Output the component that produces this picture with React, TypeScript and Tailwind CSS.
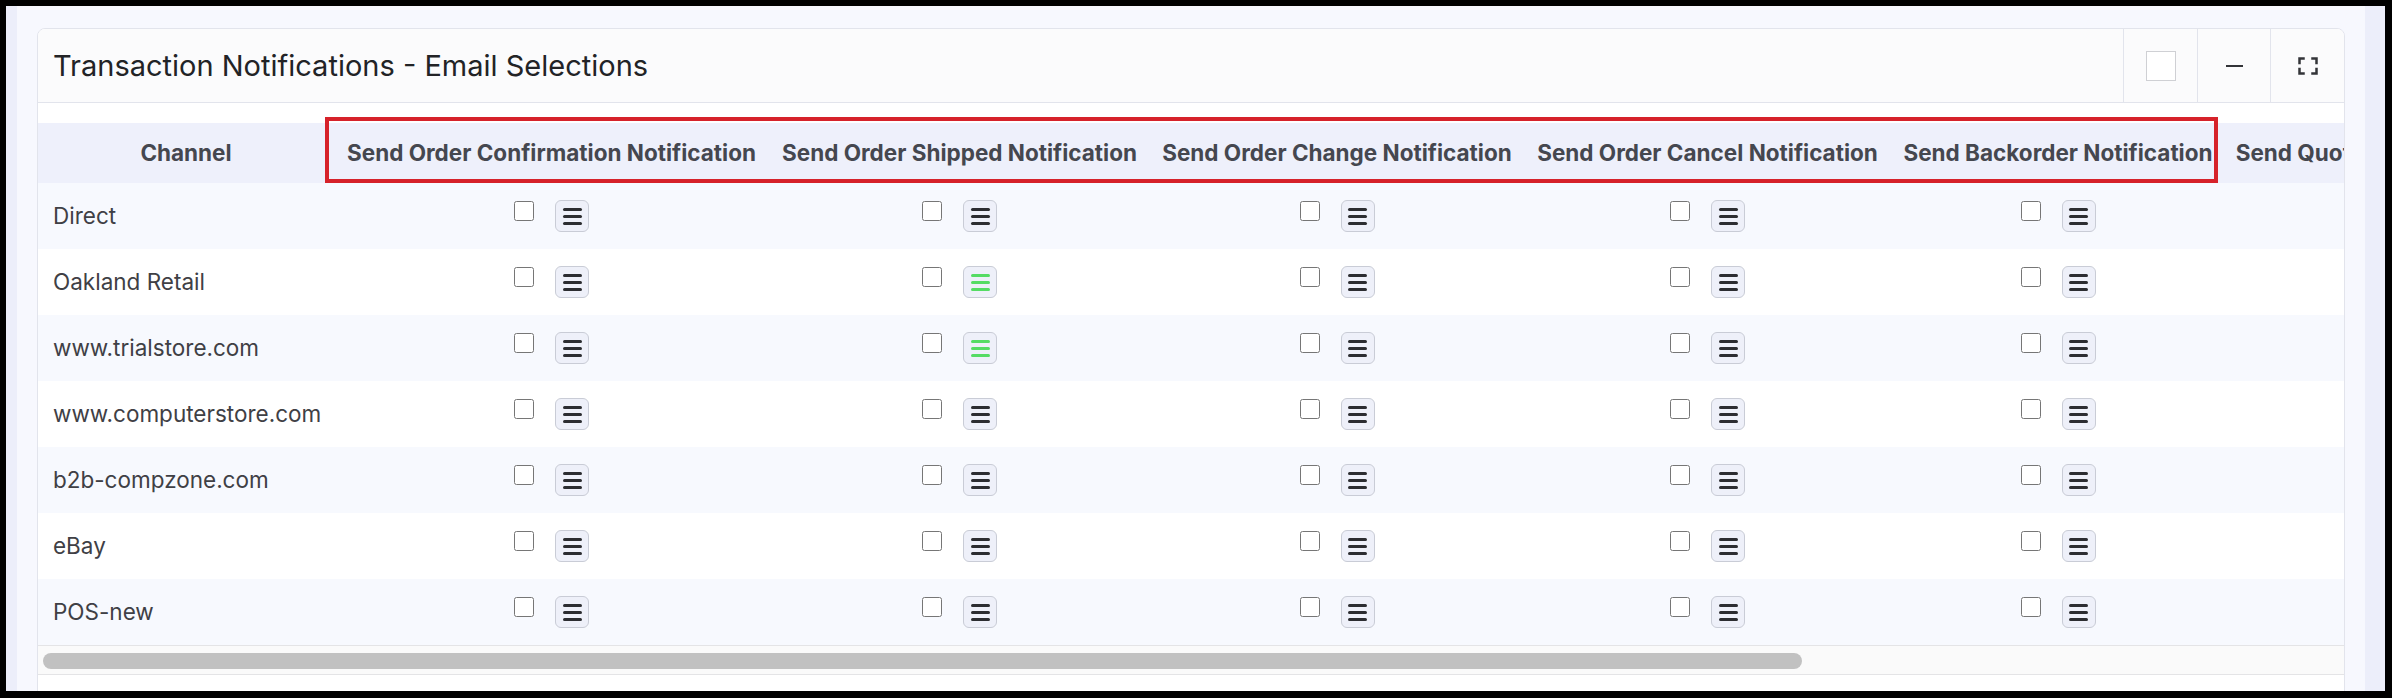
import React from 'react'

const columns = [
  { label: 'Send Order Confirmation Notification', width: 'w-[435px]' },
  { label: 'Send Order Shipped Notification', width: 'w-[381px]' },
  { label: 'Send Order Change Notification', width: 'w-[374px]' },
  { label: 'Send Order Cancel Notification', width: 'w-[367px]' },
  { label: 'Send Backorder Notification', width: 'w-[334px]' },
  { label: 'Send Quote Request Notification', width: 'w-[380px]' },
  { label: 'Send Invoice Notification', width: 'w-[415px]' },
]

const channels = [
  'Direct',
  'Oakland Retail',
  'www.trialstore.com',
  'www.computerstore.com',
  'b2b-compzone.com',
  'eBay',
  'POS-new',
]

// cells whose template menu is highlighted (has a template set)
const active: Record<string, number[]> = {
  'Oakland Retail': [1],
  'www.trialstore.com': [1],
}

function MenuButton({ on }: { on: boolean }) {
  const bar = on ? 'bg-[#55dc64]' : 'bg-[#2c2d31]'
  return (
    <button
      type="button"
      className="w-[34px] h-[32px] rounded-[6px] border border-[#c9ccd6] bg-[#eef0f9] flex flex-col items-center justify-center gap-[4px]"
    >
      <span className={`block w-[19px] h-[3px] rounded-full ${bar}`} />
      <span className={`block w-[19px] h-[3px] rounded-full ${bar}`} />
      <span className={`block w-[19px] h-[3px] rounded-full ${bar}`} />
    </button>
  )
}

function Cell({ on }: { on: boolean }) {
  return (
    <div className="flex items-start justify-center gap-[21px]">
      <input type="checkbox" className="w-[20px] h-[20px] m-0 mt-[1px]" />
      <MenuButton on={on} />
    </div>
  )
}

export default function App() {
  return (
    <div
      className="w-[2392px] h-[698px] overflow-hidden bg-black pt-[6px] pl-[6px] pr-[7px] pb-[7px]"
      style={{ fontFamily: 'Inter, "Noto Sans", sans-serif' }}
    >
      <div className="flex h-full">
        <div className="w-[11px] bg-[#eceefa]" />
        <div className="flex-1 min-w-0 bg-[#f7f8fe] px-[20px] pt-[22px] overflow-hidden">
          <div className="rounded-t-[8px] border border-[#e2e4ec] bg-white overflow-hidden">
            {/* title bar */}
            <div className="flex items-stretch h-[74px] border-b border-[#e2e4ec] bg-[#fbfbfc]">
              <div className="flex-1 flex items-center pl-[15px] text-[29px] text-[#222326]">
                Transaction Notifications - Email Selections
              </div>
              <div className="w-[74px] border-l border-[#e2e4ec] flex items-center justify-center">
                <span className="block w-[30px] h-[30px] border border-[#cfd0d4] bg-white" />
              </div>
              <div className="w-[73px] border-l border-[#e2e4ec] flex items-center justify-center">
                <span className="block w-[17px] h-[2px] bg-[#333438]" />
              </div>
              <div className="w-[74px] border-l border-[#e2e4ec] flex items-center justify-center">
                <svg width="20" height="18" viewBox="0 0 20 18" fill="none" stroke="#333438" strokeWidth="2.5" strokeLinecap="square">
                  <path d="M1.5 6V1.5H5.5" />
                  <path d="M14.5 1.5H18.5V6" />
                  <path d="M18.5 12V16.5H14.5" />
                  <path d="M5.5 16.5H1.5V12" />
                </svg>
              </div>
            </div>

            {/* table */}
            <div className="relative overflow-hidden pt-[20px]">
              <table className="table-fixed border-collapse w-[2982px]">
                <colgroup>
                  <col className="w-[296px]" />
                  {columns.map(c => (
                    <col key={c.label} className={c.width} />
                  ))}
                </colgroup>
                <thead>
                  <tr className="h-[60px] bg-[#eef0fb]">
                    <th className="p-0 text-center text-[22.5px] font-bold text-[#45474f] whitespace-nowrap">Channel</th>
                    {columns.map(c => (
                      <th key={c.label} className="p-0 text-center text-[22.5px] font-bold text-[#45474f] whitespace-nowrap">
                        {c.label}
                      </th>
                    ))}
                  </tr>
                </thead>
                <tbody>
                  {channels.map((ch, i) => (
                    <tr key={ch} className={`h-[66px] ${i % 2 === 0 ? 'bg-[#f7f9fe]' : 'bg-white'}`}>
                      <td className="p-0 pl-[15px] text-[22.5px] text-[#3f4045] whitespace-nowrap">{ch}</td>
                      {columns.map((c, j) => (
                        <td key={c.label} className="p-0">
                          <Cell on={(active[ch] || []).includes(j)} />
                        </td>
                      ))}
                    </tr>
                  ))}
                </tbody>
              </table>

              {/* highlight frame around the notification columns */}
              <div className="absolute top-[14px] left-[287px] w-[1893px] h-[66px] border-[4px] border-[#d6222a] pointer-events-none" />
            </div>

            {/* horizontal scrollbar */}
            <div className="h-[30px] border-y border-[#e4e4e6] bg-[#fafafa] pt-[7px] pl-[5px]">
              <div className="w-[1759px] h-[16px] rounded-full bg-[#c1c1c1]" />
            </div>
            <div className="h-[40px] bg-white" />
          </div>
        </div>
        <div className="w-[20px] bg-[#eceefa]" />
      </div>
    </div>
  )
}
